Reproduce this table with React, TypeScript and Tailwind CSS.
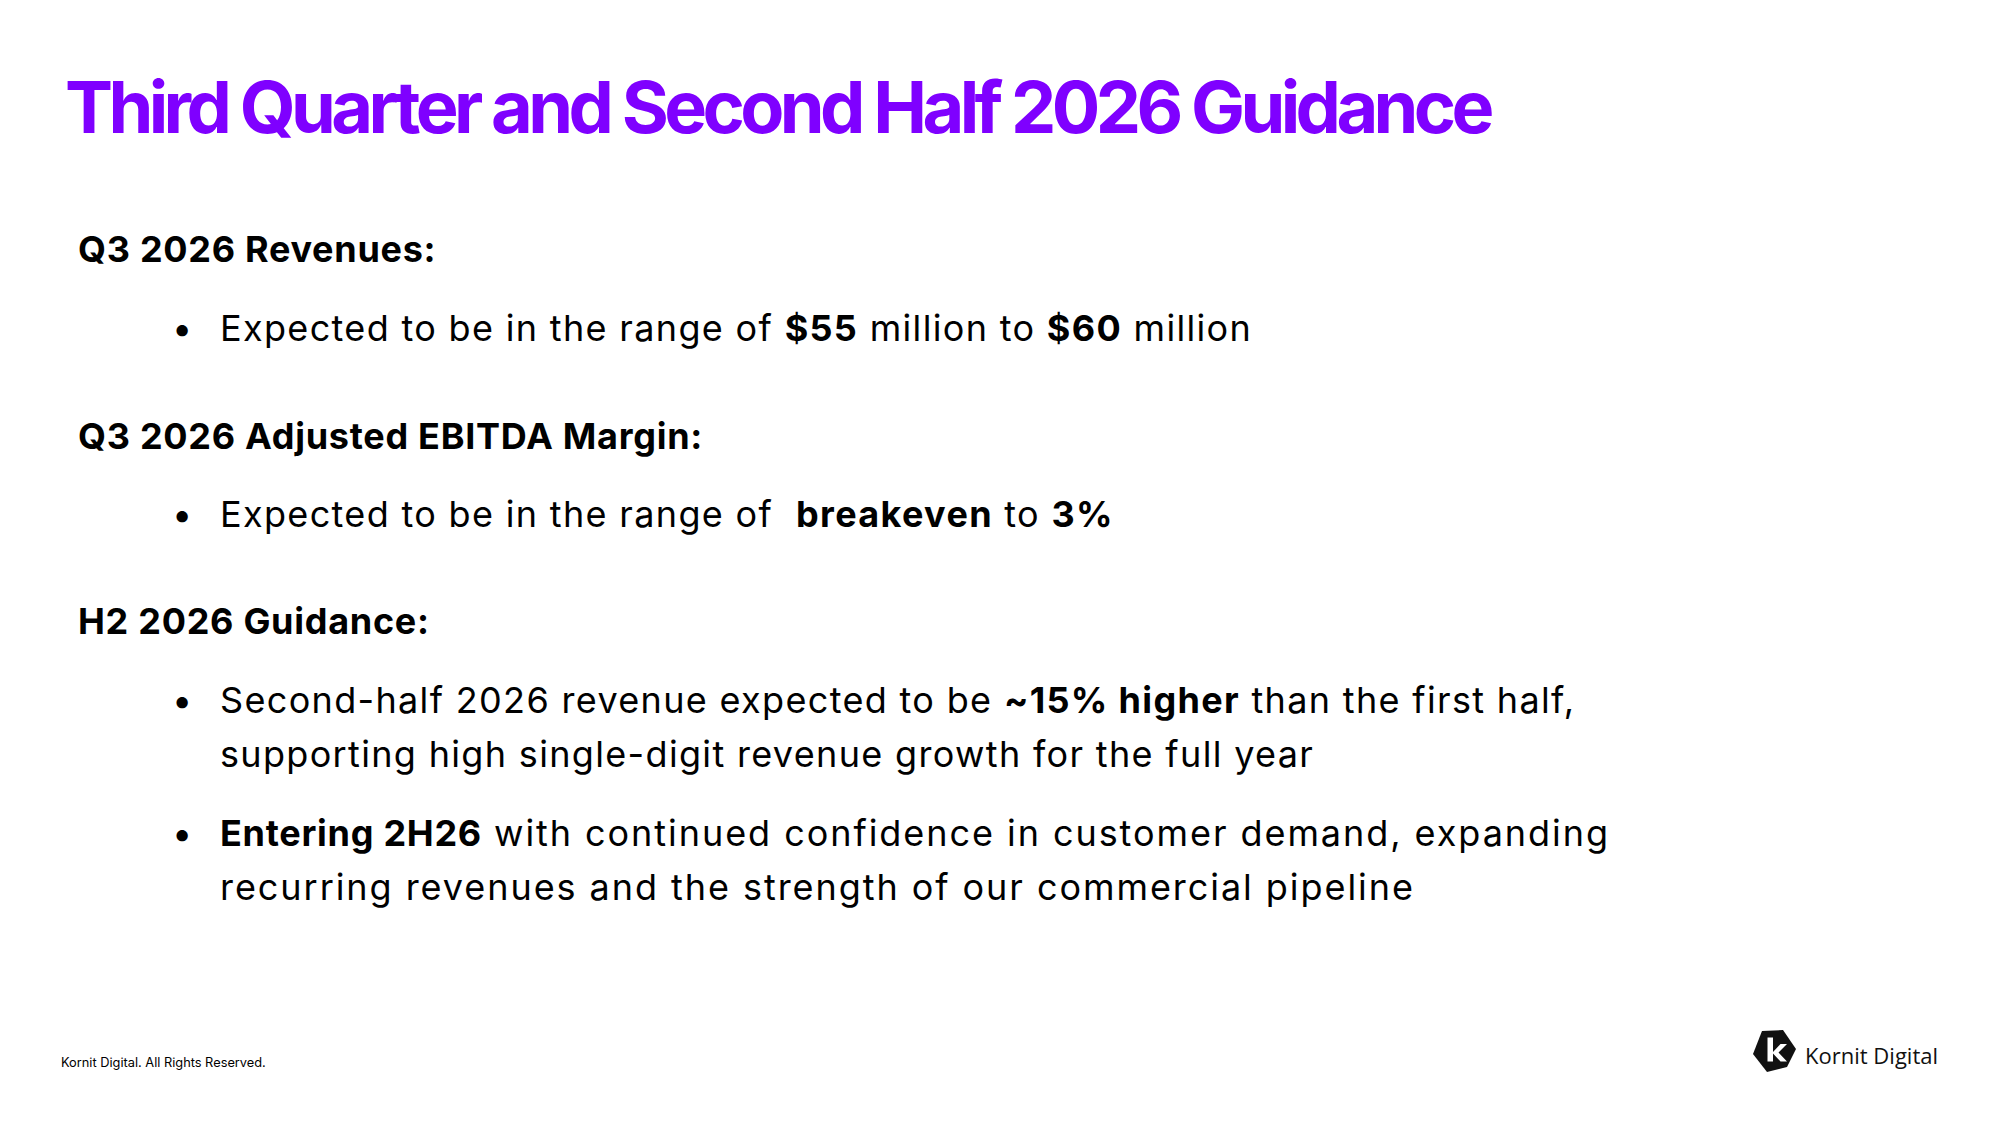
import React from "react";

function Logo() {
  return (
    <div className="flex items-center gap-[8px]">
      <svg width="44" height="43" viewBox="0 0 44 43">
        <polygon points="9,1 30,0 43,19 34,37 14,42 0,24" fill="#111" />
        <rect x="14.5" y="7.5" width="5.5" height="24" fill="#fff" />
        <polygon points="20,22 27.5,14 34,14 25.5,22.5 34,31.5 27.5,31.5 20,23.5" fill="#fff" />
      </svg>
      <span className="font-['Open_Sans'] text-[22px] text-[#111] leading-none mt-[6px]">Kornit Digital</span>
    </div>
  );
}

function Bullet({ children, className = "" }: { children: React.ReactNode; className?: string }) {
  return (
    <div className={"flex pl-[172px] text-[36px] tracking-[0.037em] leading-[54px] text-black " + className}>
      <span className="w-[48px] shrink-0">•</span>
      <span>{children}</span>
    </div>
  );
}

function Heading({ children, className = "" }: { children: React.ReactNode; className?: string }) {
  return (
    <h2 className={"pl-[78px] text-[36px] tracking-[0.02em] leading-[54px] font-bold text-black " + className}>
      {children}
    </h2>
  );
}

export default function App() {
  return (
    <div className="w-[2000px] h-[1125px] bg-white flex flex-col font-['Inter',sans-serif] overflow-hidden">
      <h1 className="pl-[65px] pt-[71px] text-[72px] leading-none font-bold tracking-[-0.064em] text-[#7f00ff]">
        Third Quarter and Second Half 2026 Guidance
      </h1>
      <Heading className="mt-[79px]">Q3 2026 Revenues:</Heading>
      <Bullet className="mt-[25px]">
        Expected to be in the range of <b>$55</b> million to <b>$60</b> million
      </Bullet>
      <Heading className="mt-[54px]">Q3 2026 Adjusted EBITDA Margin:</Heading>
      <Bullet className="mt-[24px]">
        Expected to be in the range of&nbsp; <b>breakeven</b> to <b>3%</b>
      </Bullet>
      <Heading className="mt-[53px]">H2 2026 Guidance:</Heading>
      <Bullet className="mt-[25px]">
        Second-half 2026 revenue expected to be <b>~15% higher</b> than the first half,
        <br />
        supporting high single-digit revenue growth for the full year
      </Bullet>
      <Bullet className="mt-[25px]">
        <b className="tracking-[0.02em]">Entering 2H26</b>
        <span className="tracking-[0.054em]"> with continued confidence in customer demand, expanding
        <br />
        recurring revenues and the strength of our commercial pipeline</span>
      </Bullet>
      <div className="mt-auto flex items-end justify-between pl-[61px] pr-[62px] pb-[52px]">
        <span className="text-[12.8px] text-black mb-[1px]">Kornit Digital. All Rights Reserved.</span>
        <Logo />
      </div>
    </div>
  );
}
